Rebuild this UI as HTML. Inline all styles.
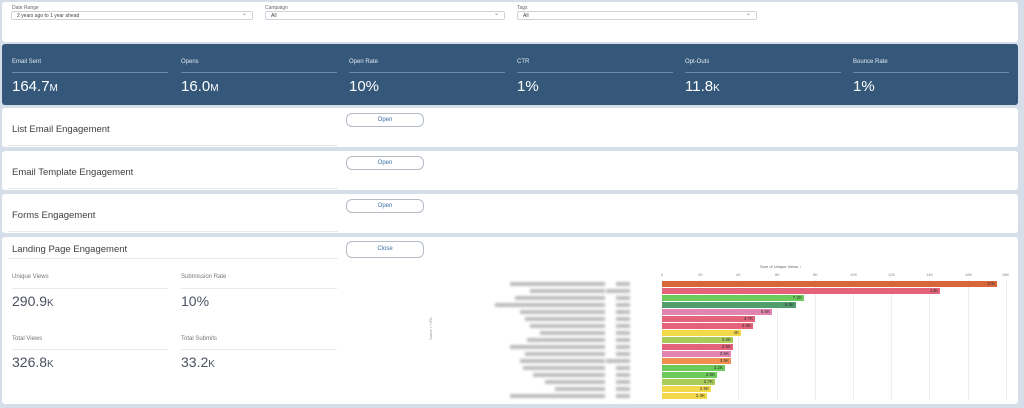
<!DOCTYPE html>
<html><head><style>
*{margin:0;padding:0;box-sizing:border-box}
body{width:1024px;height:408px;background:#d6dfe9;font-family:"Liberation Sans",sans-serif;position:relative;overflow:hidden;color:#3e3e3c}
.a{position:absolute}
.p{position:absolute;background:#fff;border-radius:3px}
.fl{font-size:5px;color:#666}
.sel{position:absolute;height:9px;border:1px solid #ccd3dc;border-radius:2px;font-size:5px;color:#444;padding:1px 0 0 5px}
.sel:after{content:"⌄";position:absolute;right:5px;top:-2px;font-size:6px;color:#777}
.sl{position:absolute;font-size:6px;color:#e4ebf2}
.sv{position:absolute;font-size:15px;color:#fff}
.ln{position:absolute;height:1px;background:#6f8aa6}
.h{position:absolute;font-size:9.5px;color:#3e3e3c}
.btn{position:absolute;width:78px;height:14px;border:1px solid #b5bcc5;border-radius:6px;font-size:6px;color:#3d6fa6;text-align:center;line-height:12px;background:#fff}
.wl{position:absolute;font-size:6px;color:#777}
.wv{position:absolute;font-size:14px;color:#4a5260}
.wline{position:absolute;height:1px;background:#e6e9ed}
.bar{position:absolute;height:6px;left:662px;font-size:4.5px;color:#333;text-align:right;padding-right:2px;line-height:6px}
.blur{position:absolute;height:4px;background:#bdbdbd;filter:blur(1.2px)}
.grid{position:absolute;top:280px;height:120px;width:1px;background:#eee}
.tk{position:absolute;top:272px;font-size:4px;color:#888}
</style></head><body>
<div class="p" style="left:2px;top:2px;width:1016px;height:40px"></div>
<div class="a fl" style="left:12px;top:5px">Date Range</div>
<div class="sel" style="left:11px;top:11px;width:242px">2 years ago to 1 year ahead</div>
<div class="a fl" style="left:265px;top:5px">Campaign</div>
<div class="sel" style="left:265px;top:11px;width:240px">All</div>
<div class="a fl" style="left:517px;top:5px">Tags</div>
<div class="sel" style="left:517px;top:11px;width:240px">All</div>

<div class="p" style="left:2px;top:44px;width:1016px;height:61px;background:#34577a"></div>
<div class="sl" style="left:12px;top:59px">Email Sent</div><div class="ln" style="left:12px;top:72px;width:156px"></div><div class="sv" style="left:12px;top:78px">164.7<span style="font-size:10px">M</span></div>
<div class="sl" style="left:181px;top:59px">Opens</div><div class="ln" style="left:181px;top:72px;width:156px"></div><div class="sv" style="left:181px;top:78px">16.0<span style="font-size:10px">M</span></div>
<div class="sl" style="left:349px;top:59px">Open Rate</div><div class="ln" style="left:349px;top:72px;width:156px"></div><div class="sv" style="left:349px;top:78px">10%</div>
<div class="sl" style="left:517px;top:59px">CTR</div><div class="ln" style="left:517px;top:72px;width:156px"></div><div class="sv" style="left:517px;top:78px">1%</div>
<div class="sl" style="left:685px;top:59px">Opt-Outs</div><div class="ln" style="left:685px;top:72px;width:156px"></div><div class="sv" style="left:685px;top:78px">11.8<span style="font-size:10px">K</span></div>
<div class="sl" style="left:853px;top:59px">Bounce Rate</div><div class="ln" style="left:853px;top:72px;width:156px"></div><div class="sv" style="left:853px;top:78px">1%</div>

<div class="p" style="left:2px;top:108px;width:1016px;height:39px"></div>
<div class="h" style="left:12px;top:124px">List Email Engagement</div><div class="wline" style="left:8px;top:145px;width:330px"></div>
<div class="btn" style="left:346px;top:113px">Open</div>
<div class="p" style="left:2px;top:151px;width:1016px;height:39px"></div>
<div class="h" style="left:12px;top:167px">Email Template Engagement</div><div class="wline" style="left:8px;top:188px;width:330px"></div>
<div class="btn" style="left:346px;top:156px">Open</div>
<div class="p" style="left:2px;top:194px;width:1016px;height:39px"></div>
<div class="h" style="left:12px;top:210px">Forms Engagement</div><div class="wline" style="left:8px;top:231px;width:330px"></div>
<div class="btn" style="left:346px;top:199px">Open</div>
<div class="p" style="left:2px;top:237px;width:1016px;height:167px"></div>
<div class="h" style="left:12px;top:244px">Landing Page Engagement</div><div class="wline" style="left:8px;top:258px;width:330px"></div>
<div class="btn" style="left:346px;top:241px;height:17px;line-height:15px">Close</div>

<div class="wl" style="left:12px;top:274px">Unique Views</div><div class="wline" style="left:12px;top:288px;width:156px"></div><div class="wv" style="left:12px;top:293px">290.9<span style="font-size:10px">K</span></div>
<div class="wl" style="left:181px;top:274px">Submission Rate</div><div class="wline" style="left:181px;top:288px;width:156px"></div><div class="wv" style="left:181px;top:293px">10%</div>
<div class="wl" style="left:12px;top:336px">Total Views</div><div class="wline" style="left:12px;top:349px;width:156px"></div><div class="wv" style="left:12px;top:354px">326.8<span style="font-size:10px">K</span></div>
<div class="wl" style="left:181px;top:336px">Total Submits</div><div class="wline" style="left:181px;top:349px;width:156px"></div><div class="wv" style="left:181px;top:354px">33.2<span style="font-size:10px">K</span></div>

<div class="a" style="left:428px;top:340px;font-size:4px;color:#999;transform:rotate(-90deg);transform-origin:left top">Name &gt; URL</div>
<div class="a" style="left:760px;top:264px;font-size:4px;color:#666">Sum of Unique Views ↓</div>
<div class="grid" style="left:662px"></div><div class="grid" style="left:700px"></div><div class="grid" style="left:738px"></div><div class="grid" style="left:777px"></div><div class="grid" style="left:815px"></div><div class="grid" style="left:853px"></div><div class="grid" style="left:891px"></div><div class="grid" style="left:929px"></div><div class="grid" style="left:968px"></div><div class="grid" style="left:1006px"></div>
<div class="tk" style="left:661px">0</div><div class="tk" style="left:698px">2K</div><div class="tk" style="left:736px">4K</div><div class="tk" style="left:775px">6K</div><div class="tk" style="left:813px">8K</div><div class="tk" style="left:850px">10K</div><div class="tk" style="left:888px">12K</div><div class="tk" style="left:926px">14K</div><div class="tk" style="left:965px">16K</div><div class="tk" style="left:1002px">18K</div>

<div id="bars"></div>
<script>
var v=[[17,'#d9663a','17K'],[14.1,'#e3647a','14K'],[7.2,'#6ccb5c','7.2K'],[6.8,'#4f9e6c','6.8K'],[5.6,'#e184b0','5.6K'],[4.7,'#e5637a','4.7K'],[4.6,'#e5637a','4.6K'],[4,'#f3d84a','4K'],[3.6,'#a9cc58','3.6K'],[3.6,'#e5637a','3.6K'],[3.5,'#e184b0','3.5K'],[3.5,'#f09050','3.5K'],[3.2,'#6ccb5c','3.2K'],[2.8,'#6ccb5c','2.8K'],[2.7,'#a9cc58','2.7K'],[2.5,'#f3d84a','2.5K'],[2.3,'#f3d84a','2.3K']];
var lw=[95,75,90,110,85,80,75,65,78,95,80,85,82,72,60,50,95];
var h='';
v.forEach(function(b,i){var y=281+i*7;
h+='<div class="bar" style="top:'+y+'px;width:'+Math.round(b[0]*19.7)+'px;background:'+b[1]+'">'+b[2]+'</div>';
h+='<div class="blur" style="top:'+(y+1)+'px;left:'+(605-lw[i])+'px;width:'+lw[i]+'px"></div>';
h+='<div class="blur" style="top:'+(y+1)+'px;left:'+(630-(i==1||i==11?24:14))+'px;width:'+(i==1||i==11?24:14)+'px"></div>';});
document.getElementById('bars').innerHTML=h;
</script>
</body></html>
